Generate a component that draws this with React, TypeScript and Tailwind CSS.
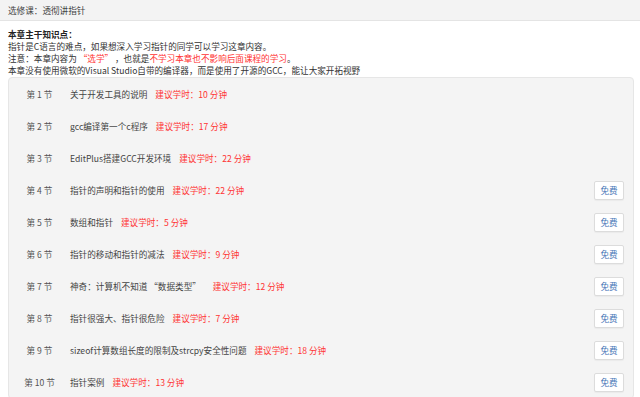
import React from 'react';

const lessons = [
  { no: 1, title: '关于开发工具的说明', mins: 10, free: false },
  { no: 2, title: 'gcc编译第一个c程序', mins: 17, free: false },
  { no: 3, title: 'EditPlus搭建GCC开发环境', mins: 22, free: false },
  { no: 4, title: '指针的声明和指针的使用', mins: 22, free: true },
  { no: 5, title: '数组和指针', mins: 5, free: true },
  { no: 6, title: '指针的移动和指针的减法', mins: 9, free: true },
  { no: 7, title: '神奇：计算机不知道 “数据类型”  ', mins: 12, free: true },
  { no: 8, title: '指针很强大、指针很危险', mins: 7, free: true },
  { no: 9, title: 'sizeof计算数组长度的限制及strcpy安全性问题', mins: 18, free: true },
  { no: 10, title: '指针案例', mins: 13, free: true },
];

const App: React.FC = () => {
  return (
    <div className="w-[640px] h-[397px] overflow-hidden bg-white text-[8.6px] text-[#333] font-['Noto_Sans_CJK_SC','Noto_Sans',sans-serif]">
      {/* Header */}
      <div className="h-[21px] flex items-center px-2 bg-[#f3f3f3] border-b border-[#e4e4e4] text-[#444]">
        选修课：透彻讲指针
      </div>

      {/* Intro */}
      <div className="pt-[7px] px-2 leading-[12px]">
        <div className="font-bold text-[#222]">本章主干知识点：</div>
        <div>指针是C语言的难点，如果想深入学习指针的同学可以学习这章内容。</div>
        <div>
          注意：本章内容为 <span className="text-[#ff3333]">“选学”</span> ，也就是
          <span className="text-[#ff3333]">不学习本章也不影响后面课程的学习</span>。
        </div>
        <div>本章没有使用微软的Visual Studio自带的编译器，而是使用了开源的GCC，能让大家开拓视野</div>
      </div>

      {/* Lessons panel */}
      <div className="mt-[1px] ml-2 mr-[6px] bg-[#f4f4f4] border border-[#e6e6e6] rounded-sm">
        {lessons.map(l => (
          <div key={l.no} className="h-[32px] flex items-center">
            <div className="w-[61px] text-center text-[#555]">第 {l.no} 节</div>
            <div className="whitespace-pre text-[#444]">{l.title}</div>
            <div className="ml-[8px] text-[#ff3333]">建议学时：{l.mins} 分钟</div>
            {l.free && (
              <button className="ml-auto mr-[9px] w-[30px] h-[19px] flex items-center justify-center bg-white border border-[#dcdcdc] rounded-[2px] shadow-[0_1px_1px_rgba(0,0,0,0.04)] text-[#4a78b8]">
                免费
              </button>
            )}
          </div>
        ))}
      </div>
    </div>
  );
};

export default App;
